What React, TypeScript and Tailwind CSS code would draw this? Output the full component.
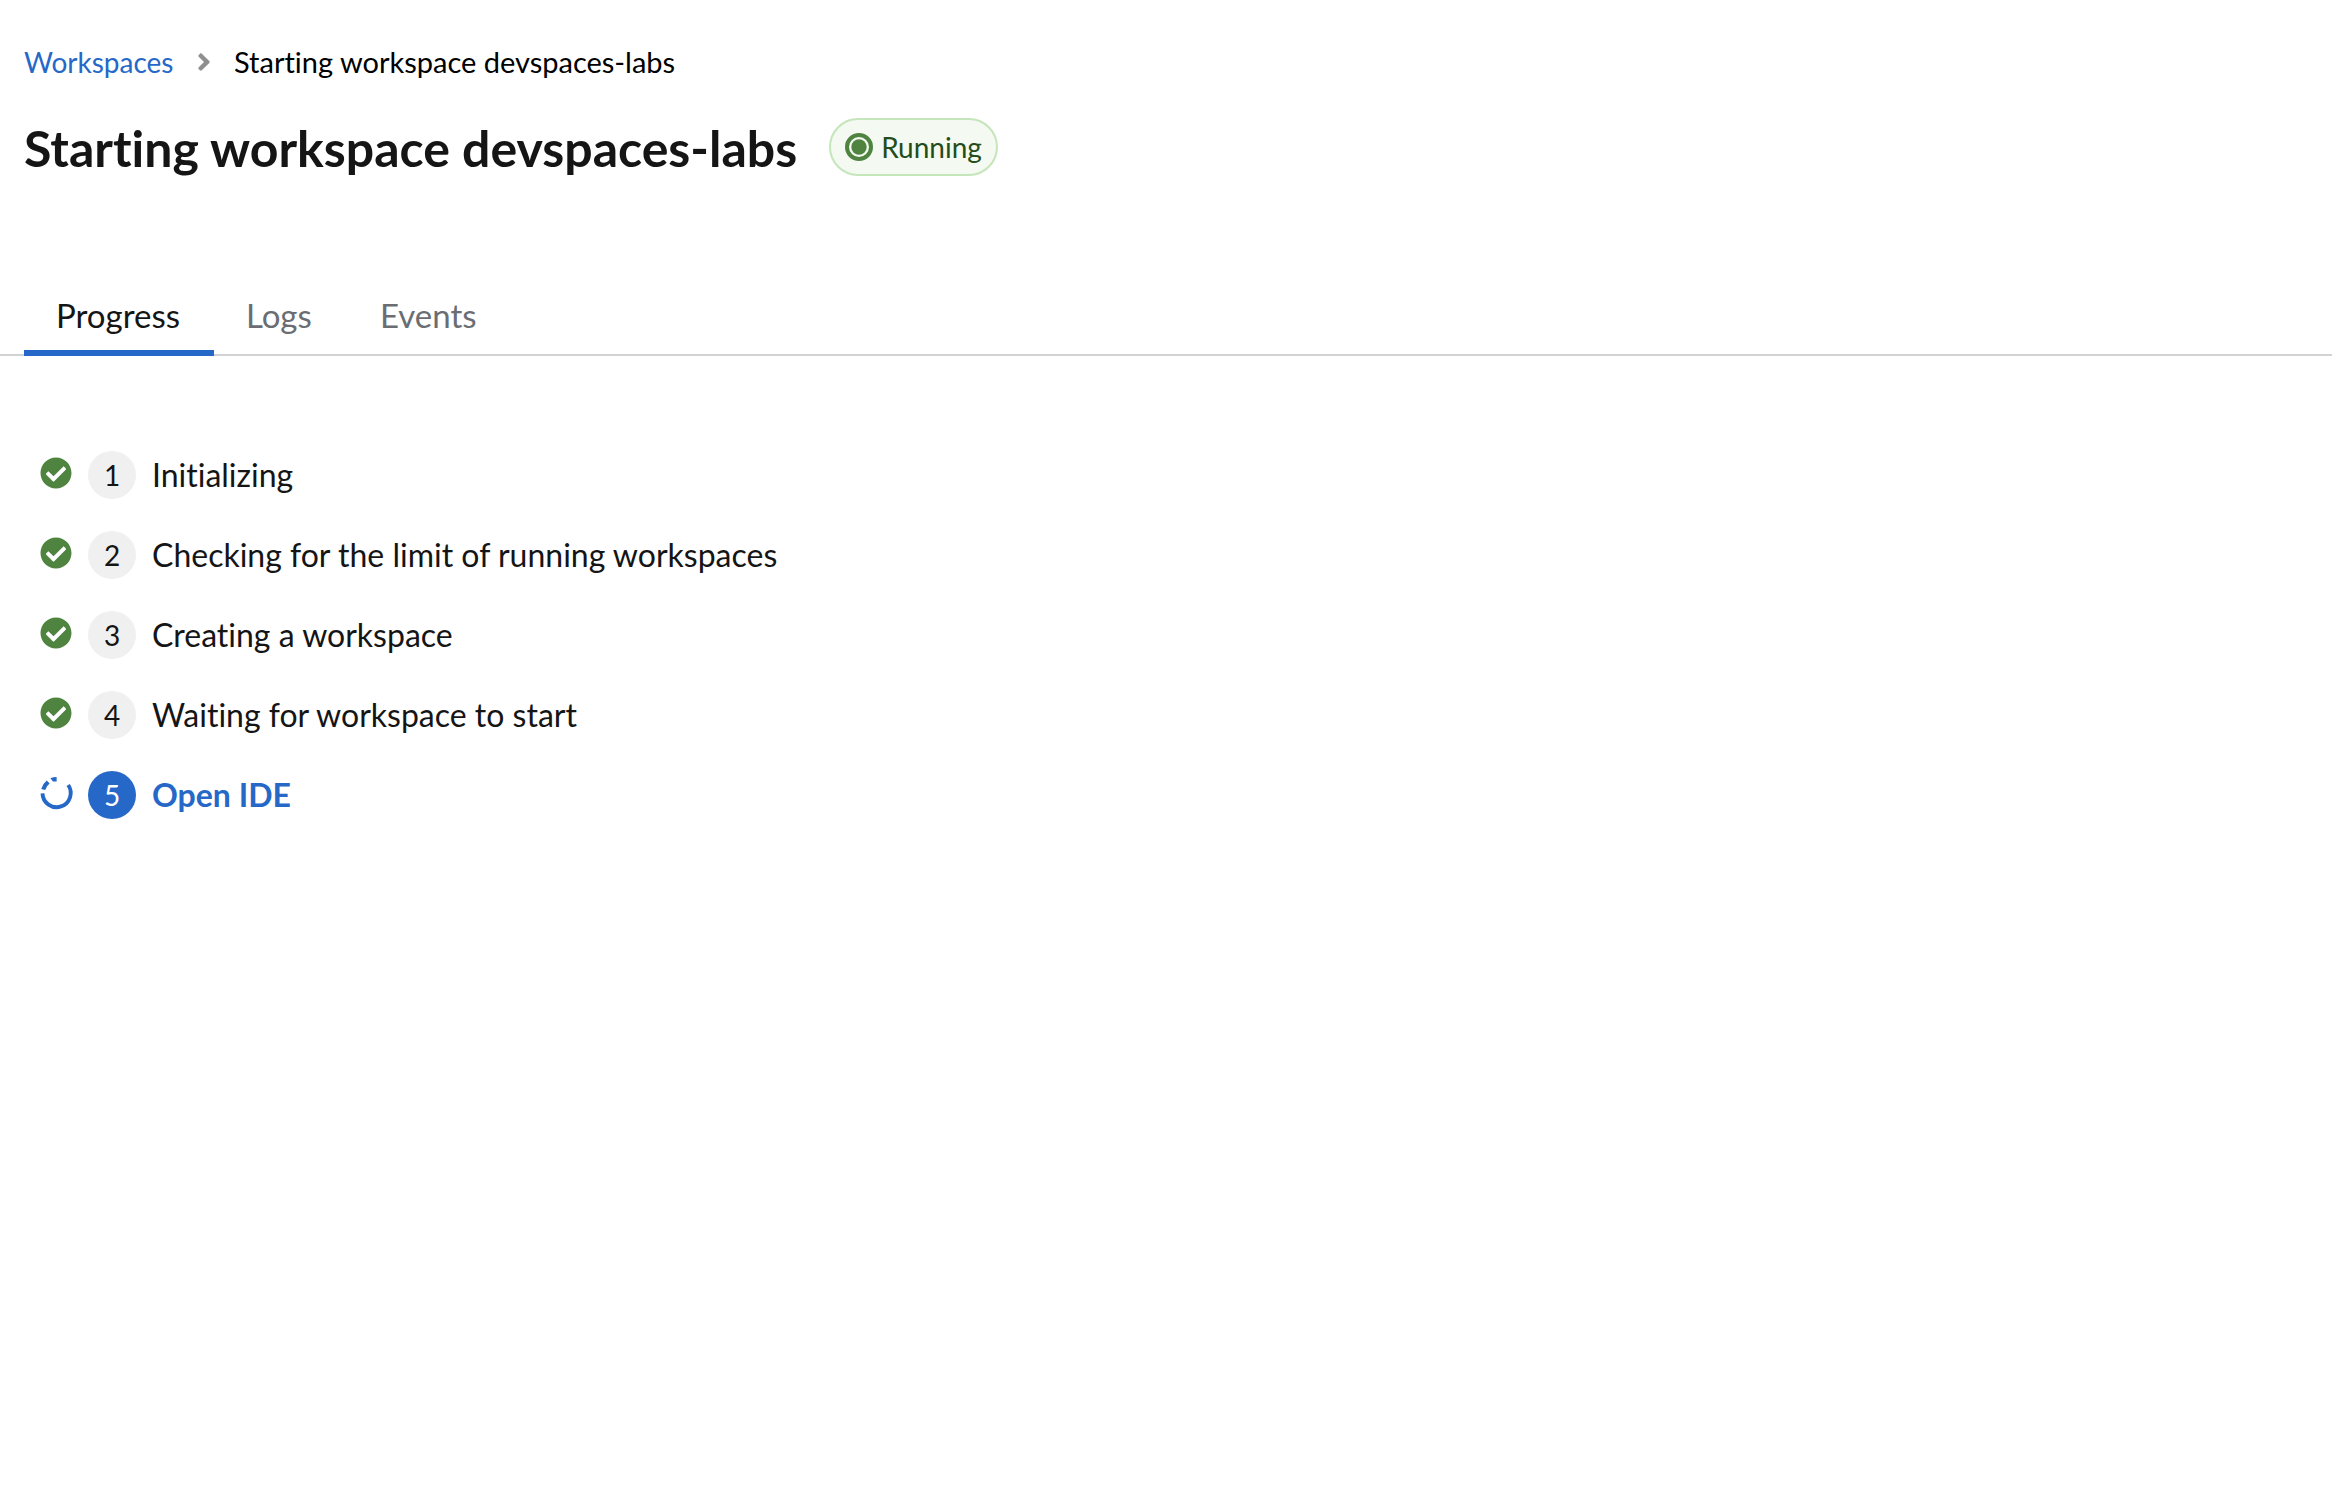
import { FaAngleRight, FaCheckCircle } from "react-icons/fa";

const steps = [
  "Initializing",
  "Checking for the limit of running workspaces",
  "Creating a workspace",
  "Waiting for workspace to start",
  "Open IDE",
];
const currentStep = 4;

const tabs = [
  { name: "Progress", width: "w-[190px]" },
  { name: "Logs", width: "w-[134px]" },
  { name: "Events", width: "w-[162px]" },
];

function RunningIcon() {
  return (
    <svg viewBox="0 0 28 28" className="size-7 text-[#4f8440]" aria-hidden="true">
      <circle cx="14" cy="14" r="12" fill="none" stroke="currentColor" strokeWidth="4" />
      <circle cx="14" cy="14" r="7.7" fill="currentColor" />
    </svg>
  );
}

function InProgressIcon() {
  return (
    <svg viewBox="0 0 32 32" className="size-8 overflow-visible text-[#2668c8]" aria-hidden="true">
      <path
        fill="none"
        stroke="currentColor"
        strokeWidth="3.9"
        d="M28.2 8A14.1 14.1 0 1 1 2.5 16.4"
      />
      <path fill="currentColor" d="M1.2 12A16 16 0 0 1 6.8 3.6L9.6 6.4A12 12 0 0 0 5.2 13Z" />
      <path fill="currentColor" d="M10.4 1.2A16 16 0 0 1 16.6 0V4.4L13 4.6Z" />
    </svg>
  );
}

export default function App() {
  return (
    <main className="min-h-screen bg-white font-['Lato',sans-serif] text-[#151515] [font-variant-ligatures:none]">
      <header className="px-6 pt-[42px]">
        <nav aria-label="Breadcrumb">
          <ol className="flex items-center text-[28px] leading-10">
            <li>
              <a href="#workspaces" className="block w-[150px] whitespace-nowrap text-[#2668c8]">
                Workspaces
              </a>
            </li>
            <li className="flex items-center">
              <FaAngleRight className="mx-4 size-7 text-[#8f8f8f]" aria-hidden="true" />
              <span className="text-[29px] leading-10 text-black">Starting workspace devspaces-labs</span>
            </li>
          </ol>
        </nav>
        <div className="mt-9 flex items-center gap-8">
          <h1 className="pt-0.5 text-[50px] leading-14 font-bold">Starting workspace devspaces-labs</h1>
          <span className="flex h-[58px] items-center gap-2 rounded-full border-2 border-[#c5e5bb] bg-[#f4faf2] px-[14px] text-[28px] leading-10 text-[#254d1b]">
            <RunningIcon />
            Running
          </span>
        </div>
      </header>

      <div role="tablist" className="mt-[104px] flex border-b-2 border-[#d2d2d2] px-6">
        {tabs.map(({ name, width }, index) => (
          <button
            key={name}
            type="button"
            role="tab"
            aria-selected={index === 0}
            className={`-mb-0.5 h-[76px] border-b-[6px] px-8 text-left text-[33px] leading-12 ${width} ${
              index === 0 ? "border-[#2668c8] text-[#151515]" : "border-transparent text-[#6a6e73]"
            }`}
          >
            {name}
          </button>
        ))}
      </div>

      <ol className="flex flex-col gap-8 px-10 pt-[95px]">
        {steps.map((label, index) => {
          const active = index === currentStep;
          return (
            <li key={label} className="flex items-center gap-4">
              <span className="pb-1">
                {active ? (
                  <InProgressIcon />
                ) : (
                  <FaCheckCircle className="size-8 text-[#4f8440]" aria-hidden="true" />
                )}
              </span>
              <span
                className={`flex size-12 items-center justify-center rounded-full text-[28px] leading-10 ${
                  active ? "bg-[#2668c8] text-white" : "bg-[#f0f0f0]"
                }`}
              >
                {index + 1}
              </span>
              <span className={`text-[32px] leading-12 ${active ? "font-bold text-[#2668c8]" : ""}`}>{label}</span>
            </li>
          );
        })}
      </ol>
    </main>
  );
}
